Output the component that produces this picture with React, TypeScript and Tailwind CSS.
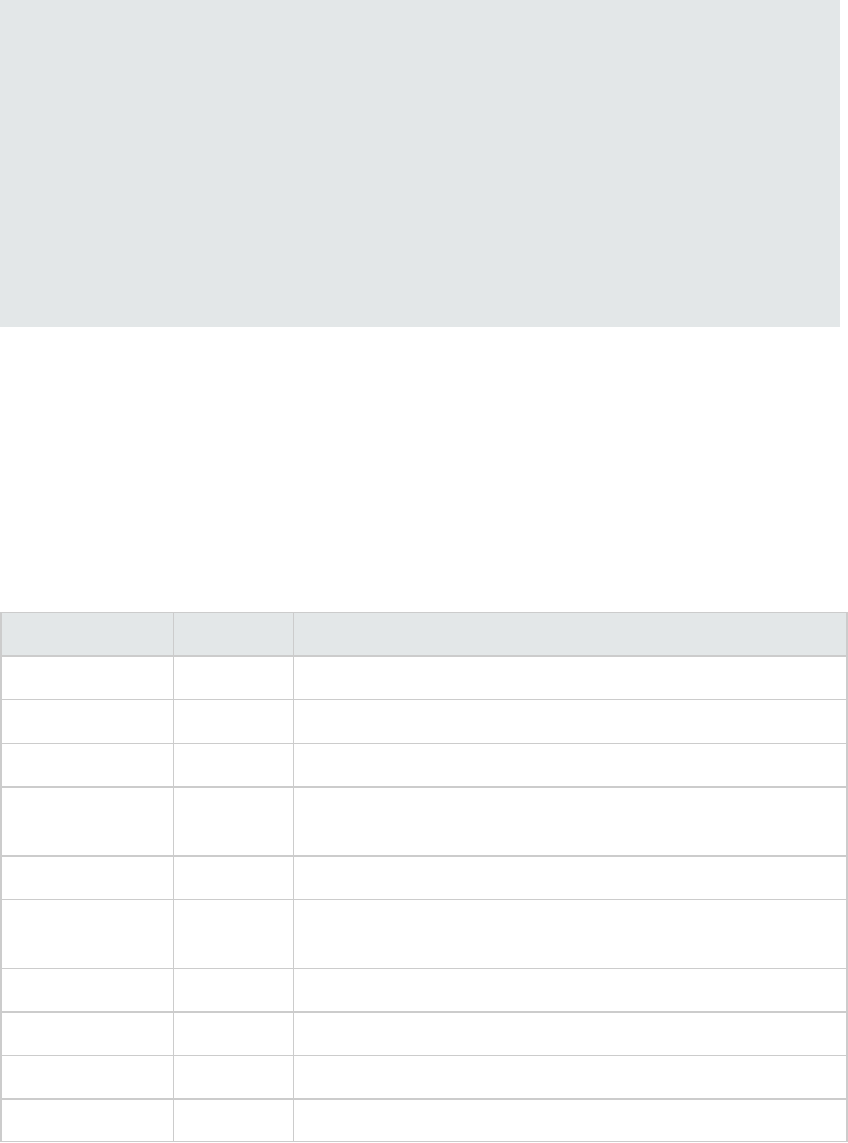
import React from 'react';

type Row = { h: string; b: string; head?: boolean };

const rows: Row[] = [
  { h: 'h-[44px]', b: 'border-b-2', head: true },
  { h: 'h-[43px]', b: 'border-b' },
  { h: 'h-[44px]', b: 'border-b' },
  { h: 'h-[44px]', b: 'border-b-2' },
  { h: 'h-[69px]', b: 'border-b-2' },
  { h: 'h-[43px]', b: 'border-b' },
  { h: 'h-[69px]', b: 'border-b' },
  { h: 'h-[44px]', b: 'border-b-2' },
  { h: 'h-[43px]', b: 'border-b' },
  { h: 'h-[44px]', b: 'border-b-2' },
  { h: 'h-[42px]', b: 'border-b' },
];

const App: React.FC = () => {
  return (
    <div className="w-[848px] min-h-[1143px] bg-white font-['Liberation_Sans',sans-serif] text-sm text-[#333]">
      {/* Banner */}
      <div className="w-[840px] h-[327px] bg-[#e3e7e8]" />

      {/* Table */}
      <div className="mt-[285px] w-[848px] border-t border-l-2 border-r-2 border-[#cccccc]">
        {rows.map((r, i) => (
          <div
            key={i}
            className={`grid grid-cols-[172px_120px_1fr] ${r.h} ${r.b} border-[#cccccc] ${r.head ? 'bg-[#e3e7e8]' : 'bg-white'}`}
          >
            <div className="border-r border-[#cccccc]" />
            <div className="border-r border-[#cccccc]" />
            <div />
          </div>
        ))}
      </div>
    </div>
  );
};

export default App;
